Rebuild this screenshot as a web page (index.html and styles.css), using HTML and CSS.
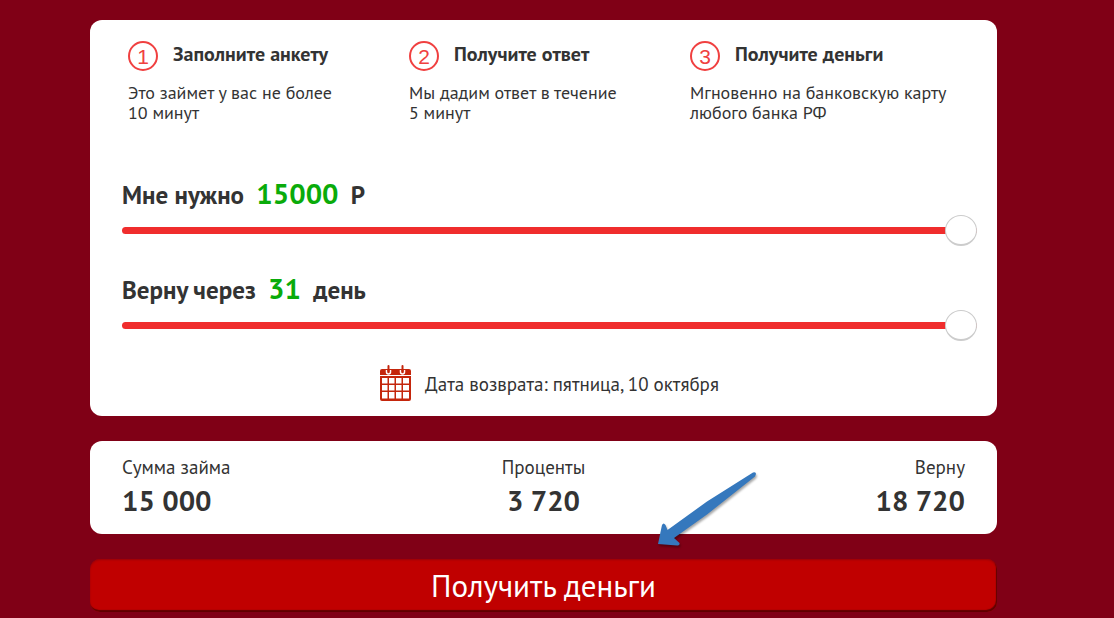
FILE: index.html
```html
<!DOCTYPE html>
<html lang="ru">
<head>
  <meta charset="UTF-8" />
  <meta name="viewport" content="width=device-width, initial-scale=1" />
  <title>Получить деньги</title>
  <link rel="stylesheet" href="styles.css">
</head>
<body>

  <main class="page">
    <form class="loan">
      <section class="card calc">
        <div class="steps">
          <div class="step">
            <div class="step-head">
              <span class="step-num">1</span>
              <h3>Заполните анкету</h3>
            </div>
            <p>Это займет у вас не более<br>10 минут</p>
          </div>
          <div class="step">
            <div class="step-head">
              <span class="step-num">2</span>
              <h3>Получите ответ</h3>
            </div>
            <p>Мы дадим ответ в течение<br>5 минут</p>
          </div>
          <div class="step">
            <div class="step-head">
              <span class="step-num">3</span>
              <h3>Получите деньги</h3>
            </div>
            <p>Мгновенно на банковскую карту<br>любого банка РФ</p>
          </div>
        </div>

        <div class="field">
          <label for="amount">Мне нужно <output id="amountVal">15000</output> Р</label>
          <input id="amount" type="range" min="1000" max="15000" step="500" value="15000" />
        </div>

        <div class="field">
          <label for="days">Верну через <output id="daysVal">31</output> день</label>
          <input id="days" type="range" min="5" max="31" value="31" />
        </div>

        <div class="date">
          <svg class="calendar" width="31" height="37" viewBox="0 0 31 37">
            <path fill="#c4260c" d="M2 4h27q2 0 2 2v4H0V6q0-2 2-2z"/>
            <path fill="none" stroke="#fff" stroke-width="1.500" d="M6.500 5v2q0 2 2 2t2-2V5M20.500 5v2q0 2 2 2t2-2V5"/>
            <path fill="none" stroke="#c4260c" stroke-width="2" stroke-linecap="round" d="M8.500 1v5M22.500 1v5"/>
            <path fill="#c4260c" fill-rule="evenodd" d="M0 11h31v23q0 2-2 2H2q-2 0-2-2zM2 13v5.500h5.500v-5.500zM9 13v5.500h5.500v-5.500zM16 13v5.500h5.500v-5.500zM23 13v5.500h6v-5.500zM2 20v5.500h5.500v-5.500zM9 20v5.500h5.500v-5.500zM16 20v5.500h5.500v-5.500zM23 20v5.500h6v-5.500zM2 27v6.500h5.500v-6.500zM9 27v6.500h5.500v-6.500zM16 27v6.500h5.500v-6.500zM23 27v6.500h6v-6.500z"/>
          </svg>
          <span>Дата возврата: пятница, 10 октября</span>
        </div>
      </section>

      <section class="card totals">
        <div class="total">Сумма займа <strong>15 000</strong></div>
        <div class="total">Проценты <strong>3 720</strong></div>
        <div class="total">Верну <strong>18 720</strong></div>
        <svg class="arrow" width="118" height="88" viewBox="0 0 118 88">
          <path fill="#3578bd" d="M113 11.500Q116 10.500 116 13L115 15.500 67 53.500 34 77 39.500 82Q40 85 37 84.500L18 83 22 64Q23.500 61 25.500 64L27.500 69 67 40.500Z"/>
        </svg>
      </section>

      <button class="submit" type="button">Получить деньги</button>
    </form>
  </main>

</body>
</html>
```

FILE: styles.css
```css
* {
  box-sizing: border-box;
}
body {
  margin: 0;
  background: #800016;
  color: #333;
  font-family: "PT Sans", Roboto, sans-serif;
}
.page {
  padding: 20px 117px 6px 90px;
}
.loan {
  display: flex;
  flex-direction: column;
  gap: 25px;
}
.card {
  background: #fff;
  border-radius: 12px;
}

/* calculator */
.calc {
  padding: 21px 20px 14px 32px;
}
.steps {
  display: grid;
  grid-template-columns: repeat(3, 1fr);
  padding: 0 6px;
  margin-bottom: 51px;
}
.step-head {
  display: flex;
  align-items: flex-start;
  gap: 15px;
  height: 30px;
}
.step-num {
  width: 30px;
  height: 30px;
  border: 2px solid #f04040;
  border-radius: 50%;
  color: #f04040;
  font: 21px/27px "Liberation Sans", Arial, sans-serif;
  text-align: center;
}
.step h3 {
  margin: 0;
  font-size: 20px;
  line-height: 26px;
}
.step p {
  margin: 12px 0 0;
  font-size: 18px;
  line-height: 20px;
}
.field {
  display: flex;
  flex-direction: column;
  gap: 2px;
  height: 70px;
  margin-bottom: 25px;
}
.field label {
  font-size: 25px;
  font-weight: bold;
  line-height: 38px;
}
.field output {
  margin: 0 6px;
  color: #0aab0a;
  font-size: 29px;
}
.field input {
  -webkit-appearance: none;
  appearance: none;
  width: 100%;
  height: 30px;
  margin: 0;
  background: none;
}
.field input::-webkit-slider-runnable-track {
  height: 7px;
  border-radius: 4px;
  background: #f02d2d;
}
.field input::-webkit-slider-thumb {
  -webkit-appearance: none;
  width: 32px;
  height: 31px;
  margin-top: -12px;
  border: 1px solid #ccc;
  border-bottom-width: 2px;
  border-radius: 50%;
  background: #fff;
}
.date {
  display: flex;
  justify-content: center;
  align-items: center;
  gap: 14px;
  padding-top: 1px;
  font-size: 19px;
}

/* totals */
.totals {
  position: relative;
  display: grid;
  grid-template-columns: 1fr 1fr 1fr;
  padding: 13px 32px 14px;
}
.total {
  font-size: 19px;
  line-height: 26px;
}
.total:nth-child(2) {
  text-align: center;
}
.total:nth-child(3) {
  text-align: right;
}
.total strong {
  display: block;
  font-size: 29px;
  line-height: 40px;
}
.arrow {
  position: absolute;
  top: 20px;
  left: 550px;
  filter: drop-shadow(1px 2px 1px rgba(0, 0, 0, .35));
  overflow: visible;
  pointer-events: none;
}

.submit {
  height: 53px;
  padding: 0;
  border: 0;
  border-radius: 10px;
  background: #c00000;
  box-shadow: inset -1px -2px 1px #600000, inset 0 1px 2px #980008;
  color: #fff;
  font-family: inherit;
  font-size: 31px;
  cursor: pointer;
}
```
